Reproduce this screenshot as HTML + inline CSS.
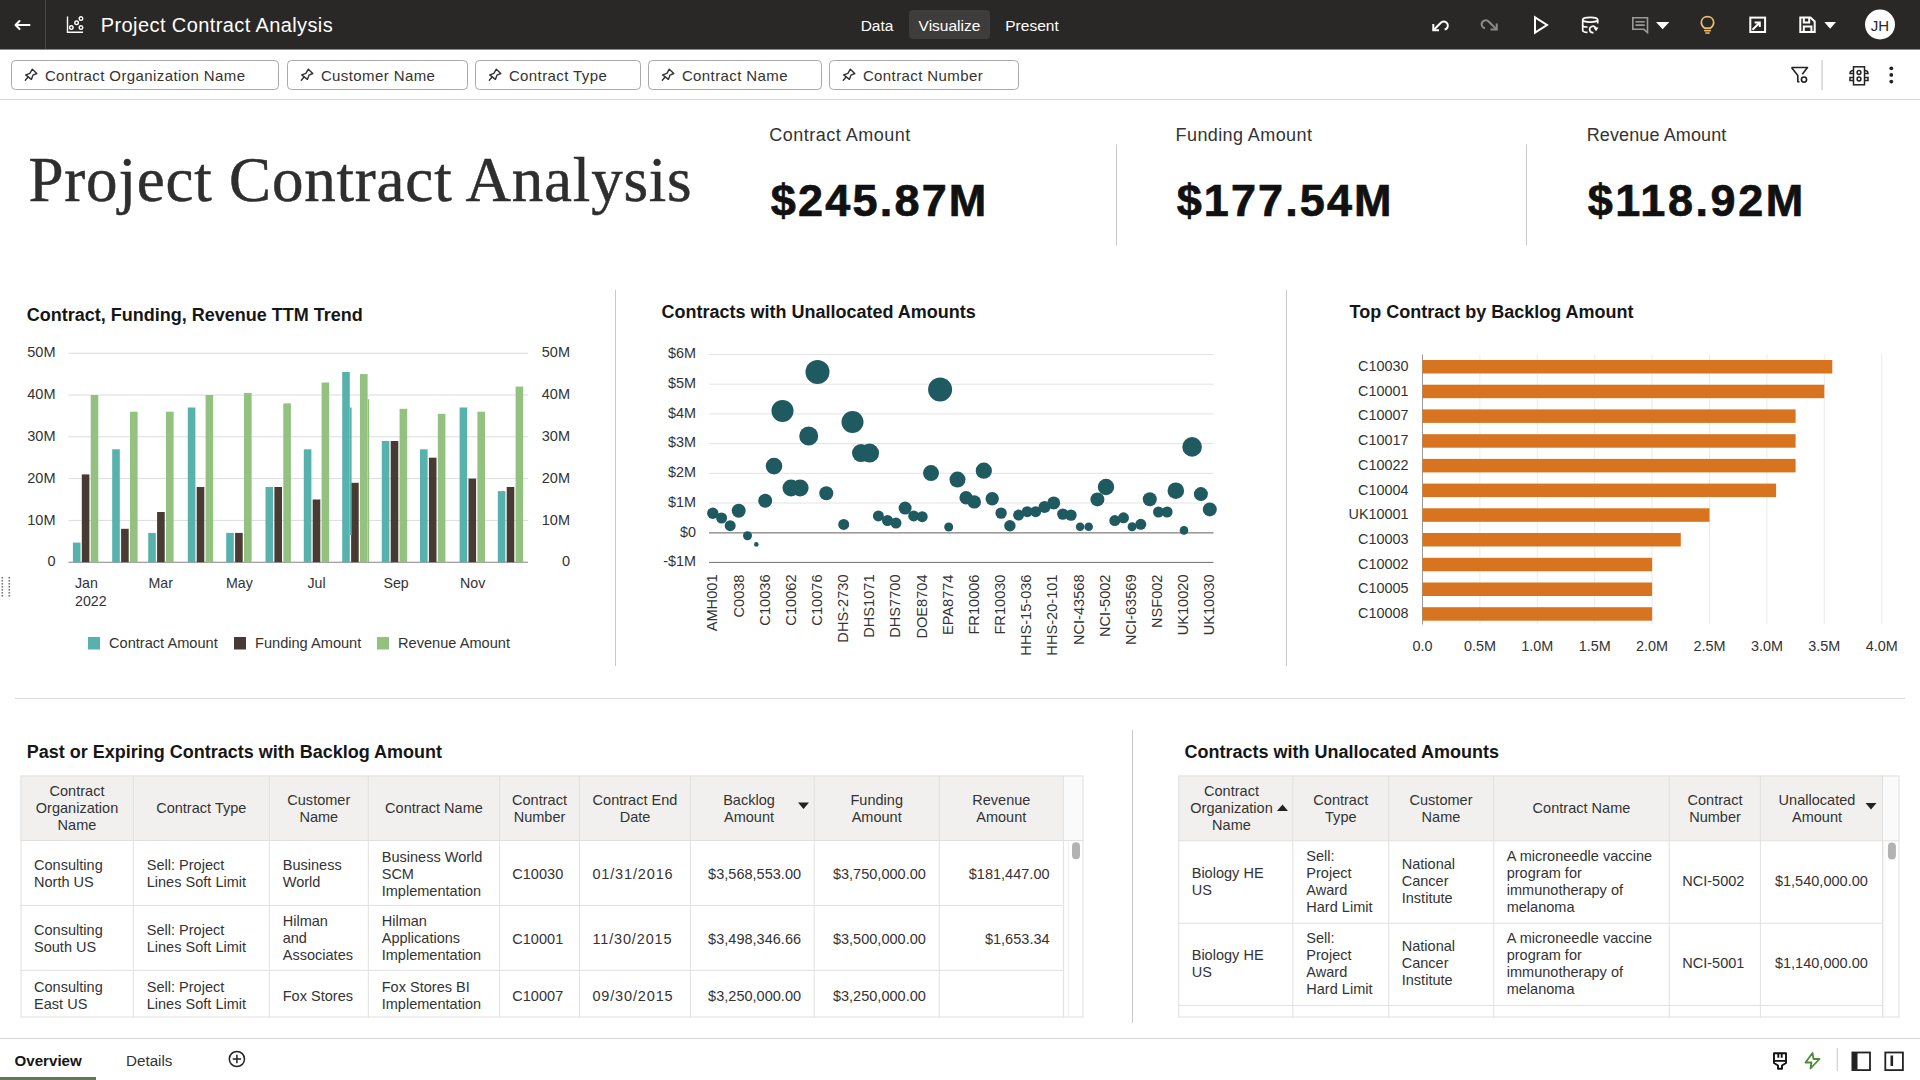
<!DOCTYPE html>
<html><head><meta charset="utf-8"><title>Project Contract Analysis</title>
<style>
html,body{margin:0;padding:0;width:1920px;height:1080px;overflow:hidden;background:#fff;}
body{font-family:"Liberation Sans", sans-serif;color:#333;position:relative;}
.abs{position:absolute;white-space:nowrap;}
svg text{font-family:"Liberation Sans", sans-serif;}
</style></head><body>

<div class="abs" style="left:0;top:0;width:1920px;height:49px;background:#2a2826;"></div><div class="abs" style="left:0;top:49px;width:1920px;height:1px;background:#8a8988;"></div>
<div class="abs" style="left:45px;top:0;width:1px;height:49px;background:#4c4a48;"></div>
<div class="abs" style="left:909px;top:10px;width:81px;height:29px;background:#3f3d3b;border-radius:4px;"></div>
<svg class="abs" style="left:0;top:0" width="1920" height="1080" viewBox="0 0 1920 1080">
<g stroke="#fff" stroke-width="2" fill="none" stroke-linecap="round" stroke-linejoin="round"><path d="M15.5 25H29.5M19.5 21L15.5 25L19.5 29"/></g>
<g stroke="#fff" stroke-width="1.4" fill="none"><path d="M67.5 16.5V32.3H83"/><circle cx="71.3" cy="27.6" r="1.8"/><circle cx="76.6" cy="22.8" r="1.8"/><circle cx="81" cy="18.6" r="1.8"/><circle cx="81" cy="27.6" r="1.8"/></g>
<text x="100.8" y="32.4" font-size="20" fill="#fff" font-weight="normal" text-anchor="start" letter-spacing="0.4" >Project Contract Analysis</text>
<text x="877" y="31" font-size="15.5" fill="#fff" font-weight="normal" text-anchor="middle" >Data</text>
<text x="949.5" y="31" font-size="15.5" fill="#fff" font-weight="normal" text-anchor="middle" >Visualize</text>
<text x="1032" y="31" font-size="15.5" fill="#fff" font-weight="normal" text-anchor="middle" >Present</text>
<g stroke="#fff" stroke-width="2" fill="none" stroke-linecap="butt" stroke-linejoin="miter"><path d="M1439 30.3H1433.3V24"/><path d="M1433.3 30.3L1440.6 23A4.1 4.1 0 1 1 1444.6 29.6"/></g>
<g stroke="#8d8b89" stroke-width="2" fill="none"><path d="M1490.5 29.6H1496.7V23.5"/><path d="M1496.7 29.6L1489 21.8A4.1 4.1 0 1 0 1485 28.3"/></g>
<path d="M1535 17.3 L1547 25 L1535 32.7 Z" stroke="#fff" stroke-width="2" fill="none" stroke-linejoin="miter"/>
<g stroke="#fff" stroke-width="1.7" fill="none"><ellipse cx="1590.2" cy="19.7" rx="7.5" ry="2.4"/><path d="M1582.7 19.7V30.5C1582.7 31.5 1584.5 32.2 1587.5 32.4M1597.7 19.7V23.5"/><path d="M1582.7 25.5C1582.7 26.5 1584.5 27 1587.5 27"/><path d="M1595.8 28.2A3.2 3.2 0 1 0 1593.5 32.6"/></g><path d="M1593.5 27.6 L1598.5 27.6 L1596 31.2 Z" fill="#fff"/>
<g stroke="#9c9a98" stroke-width="1.6" fill="none" stroke-linejoin="miter"><path d="M1632.8 17.8H1647.5V32.5L1643.8 29.3H1632.8Z"/><path d="M1635.5 21.7H1644.8M1635.5 25.1H1644.8"/></g>
<path d="M1656 22H1669.3L1662.65 29.3Z" fill="#fff"/>
<g stroke="#e6bd6c" stroke-width="1.7" fill="none" stroke-linecap="round"><path d="M1704.6 28.2C1702.5 26.8 1701.3 24.8 1701.3 22.6C1701.3 19 1704 16.6 1707.5 16.6C1711 16.6 1713.7 19 1713.7 22.6C1713.7 24.8 1712.5 26.8 1710.4 28.2Z"/><path d="M1704.8 30.6H1710.2M1706 33H1709"/></g>
<g stroke="#fff" stroke-width="2" fill="none"><rect x="1750.3" y="17.6" width="14.8" height="14.4"/><path d="M1752.5 29.8L1759.5 22.8M1754.6 22.5H1759.8V27"/></g>
<g stroke="#fff" stroke-width="2" fill="none" stroke-linejoin="miter"><path d="M1800.3 17.6H1810.4L1814.7 21.4V32H1800.3Z"/><path d="M1803.8 17.6V22.6H1809.2V17.6M1803.8 32V26.5H1811.4V32"/></g>
<path d="M1824.3 22.1H1836L1830.15 28.8Z" fill="#fff"/>
<circle cx="1880" cy="24.5" r="15" fill="#fff"/>
<text x="1880" y="30.5" font-size="15" fill="#2a2826" font-weight="normal" text-anchor="middle" >JH</text>
<rect x="11.5" y="60.5" width="267.0" height="29" rx="4" fill="#fff" stroke="#a9a9a9" stroke-width="1"/>
<g transform="translate(0.0,0)" stroke="#333" stroke-width="1.4" fill="none" stroke-linejoin="round" stroke-linecap="round"><path d="M32.3 69.2L36.8 73.5L33 75.1L31.4 79.4L25.7 74.9L29.9 73.4Z"/><path d="M27.9 77.3L25.3 80.3"/></g>
<text x="44.9" y="80.8" font-size="15" fill="#333" font-weight="normal" text-anchor="start" letter-spacing="0.4" >Contract Organization Name</text>
<rect x="287.5" y="60.5" width="180.0" height="29" rx="4" fill="#fff" stroke="#a9a9a9" stroke-width="1"/>
<g transform="translate(276.0,0)" stroke="#333" stroke-width="1.4" fill="none" stroke-linejoin="round" stroke-linecap="round"><path d="M32.3 69.2L36.8 73.5L33 75.1L31.4 79.4L25.7 74.9L29.9 73.4Z"/><path d="M27.9 77.3L25.3 80.3"/></g>
<text x="320.9" y="80.8" font-size="15" fill="#333" font-weight="normal" text-anchor="start" letter-spacing="0.4" >Customer Name</text>
<rect x="475.5" y="60.5" width="165.0" height="29" rx="4" fill="#fff" stroke="#a9a9a9" stroke-width="1"/>
<g transform="translate(464.0,0)" stroke="#333" stroke-width="1.4" fill="none" stroke-linejoin="round" stroke-linecap="round"><path d="M32.3 69.2L36.8 73.5L33 75.1L31.4 79.4L25.7 74.9L29.9 73.4Z"/><path d="M27.9 77.3L25.3 80.3"/></g>
<text x="508.9" y="80.8" font-size="15" fill="#333" font-weight="normal" text-anchor="start" letter-spacing="0.4" >Contract Type</text>
<rect x="648.5" y="60.5" width="173.0" height="29" rx="4" fill="#fff" stroke="#a9a9a9" stroke-width="1"/>
<g transform="translate(637.0,0)" stroke="#333" stroke-width="1.4" fill="none" stroke-linejoin="round" stroke-linecap="round"><path d="M32.3 69.2L36.8 73.5L33 75.1L31.4 79.4L25.7 74.9L29.9 73.4Z"/><path d="M27.9 77.3L25.3 80.3"/></g>
<text x="681.9" y="80.8" font-size="15" fill="#333" font-weight="normal" text-anchor="start" letter-spacing="0.4" >Contract Name</text>
<rect x="829.5" y="60.5" width="189.0" height="29" rx="4" fill="#fff" stroke="#a9a9a9" stroke-width="1"/>
<g transform="translate(818.0,0)" stroke="#333" stroke-width="1.4" fill="none" stroke-linejoin="round" stroke-linecap="round"><path d="M32.3 69.2L36.8 73.5L33 75.1L31.4 79.4L25.7 74.9L29.9 73.4Z"/><path d="M27.9 77.3L25.3 80.3"/></g>
<text x="862.9" y="80.8" font-size="15" fill="#333" font-weight="normal" text-anchor="start" letter-spacing="0.4" >Contract Number</text>
<rect x="0" y="99" width="1920" height="1" fill="#d6d6d6"/>
<g stroke="#222" stroke-width="1.6" fill="none" stroke-linejoin="round"><path d="M1791.5 67.5H1807.5L1802.3 74.3M1799.5 81.8H1797.8V75.5L1791.5 67.5"/><circle cx="1804" cy="79.6" r="2.6"/></g>
<rect x="1821.5" y="60" width="1.2" height="30" fill="#c9c9c9"/>
<g stroke="#222" stroke-width="1.5" fill="none"><rect x="1853.5" y="66.8" width="11" height="18"/><circle cx="1859" cy="72.5" r="1.9"/><circle cx="1859" cy="79" r="1.9"/><path d="M1853.5 70.5C1851 70.5 1850 71.5 1850 73.5H1853.5M1864.5 70.5C1867 70.5 1868 71.5 1868 73.5H1864.5M1853.5 77.5H1850V80.5H1853.5M1864.5 77.5H1868V80.5H1864.5"/></g>
<circle cx="1891.3" cy="68.3" r="1.9" fill="#222"/>
<circle cx="1891.3" cy="74.9" r="1.9" fill="#222"/>
<circle cx="1891.3" cy="81.6" r="1.9" fill="#222"/>
<text x="28.5" y="201" font-size="63" fill="#2e2e2e" stroke="#2e2e2e" stroke-width="0.5" letter-spacing="0.8" style="font-family:'Liberation Serif', serif">Project Contract Analysis</text>
<text x="769.2" y="141.3" font-size="18" fill="#333" font-weight="normal" text-anchor="start" letter-spacing="0.5" >Contract Amount</text>
<text x="770.8" y="216.3" font-size="45" fill="#111" font-weight="bold" text-anchor="start" letter-spacing="2.2" stroke="#111" stroke-width="0.7">$245.87M</text>
<text x="1175.6" y="141.3" font-size="18" fill="#333" font-weight="normal" text-anchor="start" letter-spacing="0.4" >Funding Amount</text>
<text x="1176.7" y="216.3" font-size="45" fill="#111" font-weight="bold" text-anchor="start" letter-spacing="2.1" stroke="#111" stroke-width="0.7">$177.54M</text>
<text x="1586.7" y="141.3" font-size="18" fill="#333" font-weight="normal" text-anchor="start" letter-spacing="0.12" >Revenue Amount</text>
<text x="1587.7" y="216.3" font-size="45" fill="#111" font-weight="bold" text-anchor="start" letter-spacing="2.55" stroke="#111" stroke-width="0.7">$118.92M</text>
<rect x="1116" y="144.5" width="1" height="101" fill="#c8c8c8"/>
<rect x="1526" y="144.5" width="1" height="101" fill="#c8c8c8"/>
<rect x="615" y="290" width="1" height="376" fill="#c8c8c8"/>
<rect x="1286" y="290" width="1" height="376" fill="#c8c8c8"/>
<rect x="15" y="698" width="1890" height="1" fill="#d9d9d9"/>
<rect x="1132" y="730" width="1" height="293" fill="#c8c8c8"/>
<text x="26.8" y="320.7" font-size="18" fill="#161616" font-weight="bold" text-anchor="start" >Contract, Funding, Revenue TTM Trend</text>
<rect x="68.5" y="561.7" width="459.5" height="1.2" fill="#9a9a9a"/>
<text x="55.5" y="566.4000000000001" font-size="14.5" fill="#333" font-weight="normal" text-anchor="end" >0</text>
<text x="570" y="566.4000000000001" font-size="14.5" fill="#333" font-weight="normal" text-anchor="end" >0</text>
<rect x="68.5" y="519.9" width="459.5" height="1" fill="#dcdcdc"/>
<text x="55.5" y="524.6000000000001" font-size="14.5" fill="#333" font-weight="normal" text-anchor="end" >10M</text>
<text x="570" y="524.6000000000001" font-size="14.5" fill="#333" font-weight="normal" text-anchor="end" >10M</text>
<rect x="68.5" y="478.1" width="459.5" height="1" fill="#dcdcdc"/>
<text x="55.5" y="482.8" font-size="14.5" fill="#333" font-weight="normal" text-anchor="end" >20M</text>
<text x="570" y="482.8" font-size="14.5" fill="#333" font-weight="normal" text-anchor="end" >20M</text>
<rect x="68.5" y="436.3" width="459.5" height="1" fill="#dcdcdc"/>
<text x="55.5" y="441.00000000000006" font-size="14.5" fill="#333" font-weight="normal" text-anchor="end" >30M</text>
<text x="570" y="441.00000000000006" font-size="14.5" fill="#333" font-weight="normal" text-anchor="end" >30M</text>
<rect x="68.5" y="394.5" width="459.5" height="1" fill="#dcdcdc"/>
<text x="55.5" y="399.20000000000005" font-size="14.5" fill="#333" font-weight="normal" text-anchor="end" >40M</text>
<text x="570" y="399.20000000000005" font-size="14.5" fill="#333" font-weight="normal" text-anchor="end" >40M</text>
<rect x="68.5" y="352.7" width="459.5" height="1" fill="#dcdcdc"/>
<text x="55.5" y="357.40000000000003" font-size="14.5" fill="#333" font-weight="normal" text-anchor="end" >50M</text>
<text x="570" y="357.40000000000003" font-size="14.5" fill="#333" font-weight="normal" text-anchor="end" >50M</text>
<rect x="72.9" y="542.6" width="7.6" height="19.6" fill="#57b2ae"/>
<rect x="81.8" y="474.4" width="7.6" height="87.8" fill="#483b33"/>
<rect x="90.7" y="395.0" width="7.6" height="167.2" fill="#92c180"/>
<rect x="112.2" y="449.3" width="7.6" height="112.9" fill="#57b2ae"/>
<rect x="121.1" y="528.8" width="7.6" height="33.4" fill="#483b33"/>
<rect x="130.0" y="411.7" width="7.6" height="150.5" fill="#92c180"/>
<rect x="148.2" y="532.9" width="7.6" height="29.3" fill="#57b2ae"/>
<rect x="157.1" y="512.0" width="7.6" height="50.2" fill="#483b33"/>
<rect x="166.0" y="411.7" width="7.6" height="150.5" fill="#92c180"/>
<rect x="187.8" y="407.5" width="7.6" height="154.7" fill="#57b2ae"/>
<rect x="196.7" y="487.0" width="7.6" height="75.2" fill="#483b33"/>
<rect x="205.6" y="395.0" width="7.6" height="167.2" fill="#92c180"/>
<rect x="226.2" y="532.9" width="7.6" height="29.3" fill="#57b2ae"/>
<rect x="235.1" y="532.9" width="7.6" height="29.3" fill="#483b33"/>
<rect x="244.0" y="392.9" width="7.6" height="169.3" fill="#92c180"/>
<rect x="265.5" y="487.0" width="7.6" height="75.2" fill="#57b2ae"/>
<rect x="274.4" y="487.0" width="7.6" height="75.2" fill="#483b33"/>
<rect x="283.3" y="403.4" width="7.6" height="158.8" fill="#92c180"/>
<rect x="303.8" y="449.3" width="7.6" height="112.9" fill="#57b2ae"/>
<rect x="312.7" y="499.5" width="7.6" height="62.7" fill="#483b33"/>
<rect x="321.6" y="382.5" width="7.6" height="179.7" fill="#92c180"/>
<rect x="342.2" y="372.0" width="7.6" height="190.2" fill="#57b2ae"/>
<rect x="351.1" y="482.8" width="7.6" height="79.4" fill="#483b33"/>
<rect x="360.0" y="374.1" width="7.6" height="188.1" fill="#92c180"/>
<rect x="381.8" y="441.0" width="7.6" height="121.2" fill="#57b2ae"/>
<rect x="390.7" y="441.0" width="7.6" height="121.2" fill="#483b33"/>
<rect x="399.6" y="408.8" width="7.6" height="153.4" fill="#92c180"/>
<rect x="420.0" y="449.3" width="7.6" height="112.9" fill="#57b2ae"/>
<rect x="428.9" y="457.7" width="7.6" height="104.5" fill="#483b33"/>
<rect x="437.8" y="413.8" width="7.6" height="148.4" fill="#92c180"/>
<rect x="459.6" y="407.5" width="7.6" height="154.7" fill="#57b2ae"/>
<rect x="468.5" y="478.6" width="7.6" height="83.6" fill="#483b33"/>
<rect x="477.4" y="411.7" width="7.6" height="150.5" fill="#92c180"/>
<rect x="497.8" y="491.1" width="7.6" height="71.1" fill="#57b2ae"/>
<rect x="506.7" y="487.0" width="7.6" height="75.2" fill="#483b33"/>
<rect x="515.6" y="386.6" width="7.6" height="175.6" fill="#92c180"/>
<rect x="350" y="407.5" width="1.6" height="127.5" fill="#57b2ae"/>
<rect x="367.8" y="399.2" width="1.4" height="163.0" fill="#92c180"/>
<text x="75" y="588" font-size="14.2" fill="#333" font-weight="normal" text-anchor="start" >Jan</text>
<text x="148.5" y="588" font-size="14.2" fill="#333" font-weight="normal" text-anchor="start" >Mar</text>
<text x="226" y="588" font-size="14.2" fill="#333" font-weight="normal" text-anchor="start" >May</text>
<text x="307.5" y="588" font-size="14.2" fill="#333" font-weight="normal" text-anchor="start" >Jul</text>
<text x="383.5" y="588" font-size="14.2" fill="#333" font-weight="normal" text-anchor="start" >Sep</text>
<text x="460" y="588" font-size="14.2" fill="#333" font-weight="normal" text-anchor="start" >Nov</text>
<text x="75" y="606" font-size="14.2" fill="#333" font-weight="normal" text-anchor="start" >2022</text>
<rect x="88" y="637" width="12" height="12.5" fill="#57b2ae"/>
<text x="109" y="648" font-size="14.6" fill="#333" font-weight="normal" text-anchor="start" >Contract Amount</text>
<rect x="234" y="637" width="12" height="12.5" fill="#483b33"/>
<text x="255" y="648" font-size="14.6" fill="#333" font-weight="normal" text-anchor="start" >Funding Amount</text>
<rect x="377" y="637" width="12" height="12.5" fill="#92c180"/>
<text x="398" y="648" font-size="14.6" fill="#333" font-weight="normal" text-anchor="start" >Revenue Amount</text>
<rect x="1.5" y="577" width="1.6" height="1.6" fill="#777"/>
<rect x="1.5" y="580" width="1.6" height="1.6" fill="#777"/>
<rect x="1.5" y="583" width="1.6" height="1.6" fill="#777"/>
<rect x="1.5" y="586" width="1.6" height="1.6" fill="#777"/>
<rect x="1.5" y="589" width="1.6" height="1.6" fill="#777"/>
<rect x="1.5" y="592" width="1.6" height="1.6" fill="#777"/>
<rect x="1.5" y="595" width="1.6" height="1.6" fill="#777"/>
<rect x="8.5" y="577" width="1.6" height="1.6" fill="#777"/>
<rect x="8.5" y="580" width="1.6" height="1.6" fill="#777"/>
<rect x="8.5" y="583" width="1.6" height="1.6" fill="#777"/>
<rect x="8.5" y="586" width="1.6" height="1.6" fill="#777"/>
<rect x="8.5" y="589" width="1.6" height="1.6" fill="#777"/>
<rect x="8.5" y="592" width="1.6" height="1.6" fill="#777"/>
<rect x="8.5" y="595" width="1.6" height="1.6" fill="#777"/>
<text x="661.5" y="318.2" font-size="18" fill="#161616" font-weight="bold" text-anchor="start" >Contracts with Unallocated Amounts</text>
<rect x="709" y="561.9" width="504.5" height="1" fill="#707070"/>
<text x="696" y="566.2" font-size="14.4" fill="#333" font-weight="normal" text-anchor="end" >-$1M</text>
<rect x="709" y="532.0" width="504.5" height="1.6" fill="#9c9c9c"/>
<text x="696" y="536.5" font-size="14.4" fill="#333" font-weight="normal" text-anchor="end" >$0</text>
<rect x="709" y="502.5" width="504.5" height="1" fill="#e3e3e3"/>
<text x="696" y="506.80000000000007" font-size="14.4" fill="#333" font-weight="normal" text-anchor="end" >$1M</text>
<rect x="709" y="472.8" width="504.5" height="1" fill="#e3e3e3"/>
<text x="696" y="477.1000000000001" font-size="14.4" fill="#333" font-weight="normal" text-anchor="end" >$2M</text>
<rect x="709" y="443.1" width="504.5" height="1" fill="#e3e3e3"/>
<text x="696" y="447.40000000000003" font-size="14.4" fill="#333" font-weight="normal" text-anchor="end" >$3M</text>
<rect x="709" y="413.4" width="504.5" height="1" fill="#e3e3e3"/>
<text x="696" y="417.70000000000005" font-size="14.4" fill="#333" font-weight="normal" text-anchor="end" >$4M</text>
<rect x="709" y="383.7" width="504.5" height="1" fill="#e3e3e3"/>
<text x="696" y="388.00000000000006" font-size="14.4" fill="#333" font-weight="normal" text-anchor="end" >$5M</text>
<rect x="709" y="354.0" width="504.5" height="1" fill="#e3e3e3"/>
<text x="696" y="358.30000000000007" font-size="14.4" fill="#333" font-weight="normal" text-anchor="end" >$6M</text>
<circle cx="712.8" cy="513.3" r="5.7" fill="#1f5a60"/>
<circle cx="721.6" cy="518" r="5.5" fill="#1f5a60"/>
<circle cx="730.2" cy="525.7" r="5.5" fill="#1f5a60"/>
<circle cx="738.7" cy="510.7" r="7" fill="#1f5a60"/>
<circle cx="747.5" cy="535.8" r="4.5" fill="#1f5a60"/>
<circle cx="756.3" cy="544.4" r="2.3" fill="#1f5a60"/>
<circle cx="765.2" cy="500.8" r="7" fill="#1f5a60"/>
<circle cx="774" cy="466.1" r="8.3" fill="#1f5a60"/>
<circle cx="782.5" cy="410.9" r="11" fill="#1f5a60"/>
<circle cx="791" cy="488.1" r="8.5" fill="#1f5a60"/>
<circle cx="800.1" cy="488.1" r="8.5" fill="#1f5a60"/>
<circle cx="808.7" cy="436" r="9.5" fill="#1f5a60"/>
<circle cx="817.5" cy="372" r="12" fill="#1f5a60"/>
<circle cx="826.3" cy="493.3" r="7" fill="#1f5a60"/>
<circle cx="843.7" cy="524.4" r="5.5" fill="#1f5a60"/>
<circle cx="852.5" cy="422" r="11" fill="#1f5a60"/>
<circle cx="861" cy="453.1" r="9" fill="#1f5a60"/>
<circle cx="869.6" cy="453.1" r="9.5" fill="#1f5a60"/>
<circle cx="878.4" cy="515.9" r="5.5" fill="#1f5a60"/>
<circle cx="887.5" cy="520.5" r="5.5" fill="#1f5a60"/>
<circle cx="896" cy="523.1" r="5.5" fill="#1f5a60"/>
<circle cx="905.1" cy="508.1" r="6.5" fill="#1f5a60"/>
<circle cx="913.7" cy="515.9" r="5.5" fill="#1f5a60"/>
<circle cx="922.2" cy="516.7" r="5.5" fill="#1f5a60"/>
<circle cx="931" cy="473.1" r="8" fill="#1f5a60"/>
<circle cx="940.1" cy="389.6" r="12" fill="#1f5a60"/>
<circle cx="948.7" cy="527" r="4.5" fill="#1f5a60"/>
<circle cx="957.5" cy="479.6" r="8" fill="#1f5a60"/>
<circle cx="966.1" cy="497.8" r="6.7" fill="#1f5a60"/>
<circle cx="974.3" cy="501.9" r="6.7" fill="#1f5a60"/>
<circle cx="983.8" cy="470.7" r="8.1" fill="#1f5a60"/>
<circle cx="992.2" cy="498.8" r="6.7" fill="#1f5a60"/>
<circle cx="1001.1" cy="513.1" r="5.7" fill="#1f5a60"/>
<circle cx="1009.9" cy="525.7" r="5.7" fill="#1f5a60"/>
<circle cx="1018.6" cy="515.1" r="5.5" fill="#1f5a60"/>
<circle cx="1027.2" cy="511.7" r="5.5" fill="#1f5a60"/>
<circle cx="1035.7" cy="511.7" r="5.5" fill="#1f5a60"/>
<circle cx="1044.5" cy="507" r="6" fill="#1f5a60"/>
<circle cx="1053.7" cy="502.9" r="6.5" fill="#1f5a60"/>
<circle cx="1062.8" cy="514.1" r="5.7" fill="#1f5a60"/>
<circle cx="1071" cy="515.1" r="5.7" fill="#1f5a60"/>
<circle cx="1080.1" cy="526.7" r="4.3" fill="#1f5a60"/>
<circle cx="1088.7" cy="526.7" r="4.3" fill="#1f5a60"/>
<circle cx="1097.4" cy="499.4" r="7" fill="#1f5a60"/>
<circle cx="1106" cy="487" r="8.2" fill="#1f5a60"/>
<circle cx="1114.8" cy="520.6" r="5.5" fill="#1f5a60"/>
<circle cx="1123.5" cy="517.8" r="5.5" fill="#1f5a60"/>
<circle cx="1132.1" cy="526.7" r="4.5" fill="#1f5a60"/>
<circle cx="1140.8" cy="524.3" r="5.5" fill="#1f5a60"/>
<circle cx="1149.8" cy="499.2" r="7" fill="#1f5a60"/>
<circle cx="1158.5" cy="512" r="5.5" fill="#1f5a60"/>
<circle cx="1167.1" cy="512" r="5.5" fill="#1f5a60"/>
<circle cx="1175.8" cy="490.7" r="8.3" fill="#1f5a60"/>
<circle cx="1184" cy="530.4" r="4.3" fill="#1f5a60"/>
<circle cx="1192.1" cy="446.9" r="9.8" fill="#1f5a60"/>
<circle cx="1200.9" cy="494.1" r="7" fill="#1f5a60"/>
<circle cx="1209.8" cy="509.4" r="7" fill="#1f5a60"/>
<text x="0" y="0" font-size="14.6" fill="#333" text-anchor="end" transform="translate(717.3,574.5) rotate(-90)">AMH001</text>
<text x="0" y="0" font-size="14.6" fill="#333" text-anchor="end" transform="translate(743.5,574.5) rotate(-90)">C0038</text>
<text x="0" y="0" font-size="14.6" fill="#333" text-anchor="end" transform="translate(769.6,574.5) rotate(-90)">C10036</text>
<text x="0" y="0" font-size="14.6" fill="#333" text-anchor="end" transform="translate(795.8,574.5) rotate(-90)">C10062</text>
<text x="0" y="0" font-size="14.6" fill="#333" text-anchor="end" transform="translate(821.9,574.5) rotate(-90)">C10076</text>
<text x="0" y="0" font-size="14.6" fill="#333" text-anchor="end" transform="translate(848.1,574.5) rotate(-90)">DHS-2730</text>
<text x="0" y="0" font-size="14.6" fill="#333" text-anchor="end" transform="translate(874.3,574.5) rotate(-90)">DHS1071</text>
<text x="0" y="0" font-size="14.6" fill="#333" text-anchor="end" transform="translate(900.4,574.5) rotate(-90)">DHS7700</text>
<text x="0" y="0" font-size="14.6" fill="#333" text-anchor="end" transform="translate(926.6,574.5) rotate(-90)">DOE8704</text>
<text x="0" y="0" font-size="14.6" fill="#333" text-anchor="end" transform="translate(952.7,574.5) rotate(-90)">EPA8774</text>
<text x="0" y="0" font-size="14.6" fill="#333" text-anchor="end" transform="translate(978.9,574.5) rotate(-90)">FR10006</text>
<text x="0" y="0" font-size="14.6" fill="#333" text-anchor="end" transform="translate(1005.1,574.5) rotate(-90)">FR10030</text>
<text x="0" y="0" font-size="14.6" fill="#333" text-anchor="end" transform="translate(1031.2,574.5) rotate(-90)">HHS-15-036</text>
<text x="0" y="0" font-size="14.6" fill="#333" text-anchor="end" transform="translate(1057.4,574.5) rotate(-90)">HHS-20-101</text>
<text x="0" y="0" font-size="14.6" fill="#333" text-anchor="end" transform="translate(1083.5,574.5) rotate(-90)">NCI-43568</text>
<text x="0" y="0" font-size="14.6" fill="#333" text-anchor="end" transform="translate(1109.7,574.5) rotate(-90)">NCI-5002</text>
<text x="0" y="0" font-size="14.6" fill="#333" text-anchor="end" transform="translate(1135.9,574.5) rotate(-90)">NCI-63569</text>
<text x="0" y="0" font-size="14.6" fill="#333" text-anchor="end" transform="translate(1162.0,574.5) rotate(-90)">NSF002</text>
<text x="0" y="0" font-size="14.6" fill="#333" text-anchor="end" transform="translate(1188.2,574.5) rotate(-90)">UK10020</text>
<text x="0" y="0" font-size="14.6" fill="#333" text-anchor="end" transform="translate(1214.3,574.5) rotate(-90)">UK10030</text>
<text x="1349.6" y="318.2" font-size="18" fill="#161616" font-weight="bold" text-anchor="start" >Top Contract by Backlog Amount</text>
<rect x="1422.0" y="354.5" width="1" height="270" fill="#9a9a9a"/>
<text x="1422.5" y="650.5" font-size="14.4" fill="#333" font-weight="normal" text-anchor="middle" >0.0</text>
<rect x="1479.4" y="354.5" width="1" height="270" fill="#ebebeb"/>
<text x="1479.9" y="650.5" font-size="14.4" fill="#333" font-weight="normal" text-anchor="middle" >0.5M</text>
<rect x="1536.8" y="354.5" width="1" height="270" fill="#ebebeb"/>
<text x="1537.3" y="650.5" font-size="14.4" fill="#333" font-weight="normal" text-anchor="middle" >1.0M</text>
<rect x="1594.2" y="354.5" width="1" height="270" fill="#ebebeb"/>
<text x="1594.7" y="650.5" font-size="14.4" fill="#333" font-weight="normal" text-anchor="middle" >1.5M</text>
<rect x="1651.6" y="354.5" width="1" height="270" fill="#ebebeb"/>
<text x="1652.1" y="650.5" font-size="14.4" fill="#333" font-weight="normal" text-anchor="middle" >2.0M</text>
<rect x="1709.0" y="354.5" width="1" height="270" fill="#ebebeb"/>
<text x="1709.5" y="650.5" font-size="14.4" fill="#333" font-weight="normal" text-anchor="middle" >2.5M</text>
<rect x="1766.4" y="354.5" width="1" height="270" fill="#ebebeb"/>
<text x="1766.9" y="650.5" font-size="14.4" fill="#333" font-weight="normal" text-anchor="middle" >3.0M</text>
<rect x="1823.8" y="354.5" width="1" height="270" fill="#ebebeb"/>
<text x="1824.3" y="650.5" font-size="14.4" fill="#333" font-weight="normal" text-anchor="middle" >3.5M</text>
<rect x="1881.2" y="354.5" width="1" height="270" fill="#ebebeb"/>
<text x="1881.7" y="650.5" font-size="14.4" fill="#333" font-weight="normal" text-anchor="middle" >4.0M</text>
<rect x="1422.5" y="360.0" width="409.8" height="13.5" fill="#d8741f"/>
<text x="1408.5" y="370.9" font-size="14.4" fill="#333" font-weight="normal" text-anchor="end" >C10030</text>
<rect x="1422.5" y="384.7" width="401.8" height="13.5" fill="#d8741f"/>
<text x="1408.5" y="395.62" font-size="14.4" fill="#333" font-weight="normal" text-anchor="end" >C10001</text>
<rect x="1422.5" y="409.4" width="373.1" height="13.5" fill="#d8741f"/>
<text x="1408.5" y="420.34" font-size="14.4" fill="#333" font-weight="normal" text-anchor="end" >C10007</text>
<rect x="1422.5" y="434.2" width="373.1" height="13.5" fill="#d8741f"/>
<text x="1408.5" y="445.05999999999995" font-size="14.4" fill="#333" font-weight="normal" text-anchor="end" >C10017</text>
<rect x="1422.5" y="458.9" width="373.1" height="13.5" fill="#d8741f"/>
<text x="1408.5" y="469.78" font-size="14.4" fill="#333" font-weight="normal" text-anchor="end" >C10022</text>
<rect x="1422.5" y="483.6" width="353.6" height="13.5" fill="#d8741f"/>
<text x="1408.5" y="494.5" font-size="14.4" fill="#333" font-weight="normal" text-anchor="end" >C10004</text>
<rect x="1422.5" y="508.3" width="287.0" height="13.5" fill="#d8741f"/>
<text x="1408.5" y="519.22" font-size="14.4" fill="#333" font-weight="normal" text-anchor="end" >UK10001</text>
<rect x="1422.5" y="533.0" width="258.3" height="13.5" fill="#d8741f"/>
<text x="1408.5" y="543.9399999999999" font-size="14.4" fill="#333" font-weight="normal" text-anchor="end" >C10003</text>
<rect x="1422.5" y="557.8" width="229.6" height="13.5" fill="#d8741f"/>
<text x="1408.5" y="568.66" font-size="14.4" fill="#333" font-weight="normal" text-anchor="end" >C10002</text>
<rect x="1422.5" y="582.5" width="229.6" height="13.5" fill="#d8741f"/>
<text x="1408.5" y="593.38" font-size="14.4" fill="#333" font-weight="normal" text-anchor="end" >C10005</text>
<rect x="1422.5" y="607.2" width="229.6" height="13.5" fill="#d8741f"/>
<text x="1408.5" y="618.1" font-size="14.4" fill="#333" font-weight="normal" text-anchor="end" >C10008</text>
<text x="26.7" y="757.6" font-size="18" fill="#161616" font-weight="bold" text-anchor="start" >Past or Expiring Contracts with Backlog Amount</text>
<rect x="20.5" y="775.5" width="1042.9" height="65.0" fill="#f1f0ef"/>
<rect x="1063.4" y="775.5" width="20.1" height="65.0" fill="#fafafa"/>
<rect x="21.0" y="776.0" width="1062.0" height="241.0" fill="none" stroke="#e0e0e0" stroke-width="1"/>
<rect x="132.8" y="775.5" width="1" height="242.0" fill="#e0e0e0"/>
<rect x="268.8" y="775.5" width="1" height="242.0" fill="#e0e0e0"/>
<rect x="367.8" y="775.5" width="1" height="242.0" fill="#e0e0e0"/>
<rect x="499.1" y="775.5" width="1" height="242.0" fill="#e0e0e0"/>
<rect x="578.9" y="775.5" width="1" height="242.0" fill="#e0e0e0"/>
<rect x="689.9" y="775.5" width="1" height="242.0" fill="#e0e0e0"/>
<rect x="813.7" y="775.5" width="1" height="242.0" fill="#e0e0e0"/>
<rect x="938.8" y="775.5" width="1" height="242.0" fill="#e0e0e0"/>
<rect x="1062.9" y="775.5" width="1" height="242.0" fill="#e0e0e0"/>
<rect x="20.5" y="840.0" width="1063.0" height="1" fill="#e0e0e0"/>
<rect x="20.5" y="904.9" width="1042.9" height="1" fill="#e0e0e0"/>
<rect x="20.5" y="969.9" width="1042.9" height="1" fill="#e0e0e0"/>
<rect x="1068.3" y="840.5" width="0.8" height="176.0" fill="#ececec"/>
<rect x="1072.0" y="842.2" width="8" height="17" rx="4" fill="#b3b3b3"/>
<text x="77" y="796.4" font-size="14.5" fill="#333" font-weight="normal" text-anchor="middle" letter-spacing="0.02" >Contract</text>
<text x="77" y="813.4" font-size="14.5" fill="#333" font-weight="normal" text-anchor="middle" letter-spacing="0.02" >Organization</text>
<text x="77" y="830.4" font-size="14.5" fill="#333" font-weight="normal" text-anchor="middle" letter-spacing="0.02" >Name</text>
<text x="201.3" y="813.4" font-size="14.5" fill="#333" font-weight="normal" text-anchor="middle" letter-spacing="0.02" >Contract Type</text>
<text x="318.8" y="804.9" font-size="14.5" fill="#333" font-weight="normal" text-anchor="middle" letter-spacing="0.02" >Customer</text>
<text x="318.8" y="821.9" font-size="14.5" fill="#333" font-weight="normal" text-anchor="middle" letter-spacing="0.02" >Name</text>
<text x="434" y="813.4" font-size="14.5" fill="#333" font-weight="normal" text-anchor="middle" letter-spacing="0.02" >Contract Name</text>
<text x="539.5" y="804.9" font-size="14.5" fill="#333" font-weight="normal" text-anchor="middle" letter-spacing="0.02" >Contract</text>
<text x="539.5" y="821.9" font-size="14.5" fill="#333" font-weight="normal" text-anchor="middle" letter-spacing="0.02" >Number</text>
<text x="635" y="804.9" font-size="14.5" fill="#333" font-weight="normal" text-anchor="middle" letter-spacing="0.02" >Contract End</text>
<text x="635" y="821.9" font-size="14.5" fill="#333" font-weight="normal" text-anchor="middle" letter-spacing="0.02" >Date</text>
<text x="749" y="804.9" font-size="14.5" fill="#333" font-weight="normal" text-anchor="middle" letter-spacing="0.02" >Backlog</text>
<text x="749" y="821.9" font-size="14.5" fill="#333" font-weight="normal" text-anchor="middle" letter-spacing="0.02" >Amount</text>
<path d="M798 802.5H809L803.5 809Z" fill="#222"/>
<text x="876.7" y="804.9" font-size="14.5" fill="#333" font-weight="normal" text-anchor="middle" letter-spacing="0.02" >Funding</text>
<text x="876.7" y="821.9" font-size="14.5" fill="#333" font-weight="normal" text-anchor="middle" letter-spacing="0.02" >Amount</text>
<text x="1001.3" y="804.9" font-size="14.5" fill="#333" font-weight="normal" text-anchor="middle" letter-spacing="0.02" >Revenue</text>
<text x="1001.3" y="821.9" font-size="14.5" fill="#333" font-weight="normal" text-anchor="middle" letter-spacing="0.02" >Amount</text>
<text x="34" y="870.1" font-size="14.5" fill="#333" font-weight="normal" text-anchor="start" letter-spacing="0.02" >Consulting</text>
<text x="34" y="887.1" font-size="14.5" fill="#333" font-weight="normal" text-anchor="start" letter-spacing="0.02" >North US</text>
<text x="146.7" y="870.1" font-size="14.5" fill="#333" font-weight="normal" text-anchor="start" letter-spacing="0.02" >Sell: Project</text>
<text x="146.7" y="887.1" font-size="14.5" fill="#333" font-weight="normal" text-anchor="start" letter-spacing="0.02" >Lines Soft Limit</text>
<text x="282.7" y="870.1" font-size="14.5" fill="#333" font-weight="normal" text-anchor="start" letter-spacing="0.02" >Business</text>
<text x="282.7" y="887.1" font-size="14.5" fill="#333" font-weight="normal" text-anchor="start" letter-spacing="0.02" >World</text>
<text x="381.7" y="861.6" font-size="14.5" fill="#333" font-weight="normal" text-anchor="start" letter-spacing="0.02" >Business World</text>
<text x="381.7" y="878.6" font-size="14.5" fill="#333" font-weight="normal" text-anchor="start" letter-spacing="0.02" >SCM</text>
<text x="381.7" y="895.6" font-size="14.5" fill="#333" font-weight="normal" text-anchor="start" letter-spacing="0.02" >Implementation</text>
<text x="512.3" y="878.6" font-size="14.5" fill="#333" font-weight="normal" text-anchor="start" letter-spacing="0.02" >C10030</text>
<text x="592.4" y="878.6" font-size="14.5" fill="#333" font-weight="normal" text-anchor="start" letter-spacing="0.85" >01/31/2016</text>
<text x="801.1" y="878.6" font-size="14.5" fill="#333" font-weight="normal" text-anchor="end" letter-spacing="0.02" >$3,568,553.00</text>
<text x="925.9" y="878.6" font-size="14.5" fill="#333" font-weight="normal" text-anchor="end" letter-spacing="0.02" >$3,750,000.00</text>
<text x="1049.6" y="878.6" font-size="14.5" fill="#333" font-weight="normal" text-anchor="end" letter-spacing="0.02" >$181,447.00</text>
<text x="34" y="934.6" font-size="14.5" fill="#333" font-weight="normal" text-anchor="start" letter-spacing="0.02" >Consulting</text>
<text x="34" y="951.6" font-size="14.5" fill="#333" font-weight="normal" text-anchor="start" letter-spacing="0.02" >South US</text>
<text x="146.7" y="934.6" font-size="14.5" fill="#333" font-weight="normal" text-anchor="start" letter-spacing="0.02" >Sell: Project</text>
<text x="146.7" y="951.6" font-size="14.5" fill="#333" font-weight="normal" text-anchor="start" letter-spacing="0.02" >Lines Soft Limit</text>
<text x="282.7" y="926.4" font-size="14.5" fill="#333" font-weight="normal" text-anchor="start" letter-spacing="0.02" >Hilman</text>
<text x="282.7" y="943.4" font-size="14.5" fill="#333" font-weight="normal" text-anchor="start" letter-spacing="0.02" >and</text>
<text x="282.7" y="960.4" font-size="14.5" fill="#333" font-weight="normal" text-anchor="start" letter-spacing="0.02" >Associates</text>
<text x="381.7" y="926.4" font-size="14.5" fill="#333" font-weight="normal" text-anchor="start" letter-spacing="0.02" >Hilman</text>
<text x="381.7" y="943.4" font-size="14.5" fill="#333" font-weight="normal" text-anchor="start" letter-spacing="0.02" >Applications</text>
<text x="381.7" y="960.4" font-size="14.5" fill="#333" font-weight="normal" text-anchor="start" letter-spacing="0.02" >Implementation</text>
<text x="512.3" y="943.6" font-size="14.5" fill="#333" font-weight="normal" text-anchor="start" letter-spacing="0.02" >C10001</text>
<text x="592.4" y="943.6" font-size="14.5" fill="#333" font-weight="normal" text-anchor="start" letter-spacing="0.85" >11/30/2015</text>
<text x="801.1" y="943.6" font-size="14.5" fill="#333" font-weight="normal" text-anchor="end" letter-spacing="0.02" >$3,498,346.66</text>
<text x="925.9" y="943.6" font-size="14.5" fill="#333" font-weight="normal" text-anchor="end" letter-spacing="0.02" >$3,500,000.00</text>
<text x="1049.6" y="943.6" font-size="14.5" fill="#333" font-weight="normal" text-anchor="end" letter-spacing="0.02" >$1,653.34</text>
<text x="34" y="992.1" font-size="14.5" fill="#333" font-weight="normal" text-anchor="start" letter-spacing="0.02" >Consulting</text>
<text x="34" y="1009.1" font-size="14.5" fill="#333" font-weight="normal" text-anchor="start" letter-spacing="0.02" >East US</text>
<text x="146.7" y="992.1" font-size="14.5" fill="#333" font-weight="normal" text-anchor="start" letter-spacing="0.02" >Sell: Project</text>
<text x="146.7" y="1009.1" font-size="14.5" fill="#333" font-weight="normal" text-anchor="start" letter-spacing="0.02" >Lines Soft Limit</text>
<text x="282.7" y="1000.6" font-size="14.5" fill="#333" font-weight="normal" text-anchor="start" letter-spacing="0.02" >Fox Stores</text>
<text x="381.7" y="992.1" font-size="14.5" fill="#333" font-weight="normal" text-anchor="start" letter-spacing="0.02" >Fox Stores BI</text>
<text x="381.7" y="1009.1" font-size="14.5" fill="#333" font-weight="normal" text-anchor="start" letter-spacing="0.02" >Implementation</text>
<text x="512.3" y="1001.1" font-size="14.5" fill="#333" font-weight="normal" text-anchor="start" letter-spacing="0.02" >C10007</text>
<text x="592.4" y="1001.1" font-size="14.5" fill="#333" font-weight="normal" text-anchor="start" letter-spacing="0.85" >09/30/2015</text>
<text x="801.1" y="1001.1" font-size="14.5" fill="#333" font-weight="normal" text-anchor="end" letter-spacing="0.02" >$3,250,000.00</text>
<text x="925.9" y="1001.1" font-size="14.5" fill="#333" font-weight="normal" text-anchor="end" letter-spacing="0.02" >$3,250,000.00</text>
<text x="1184.6" y="757.6" font-size="18" fill="#161616" font-weight="bold" text-anchor="start" >Contracts with Unallocated Amounts</text>
<rect x="1178.3" y="775.5" width="704.2" height="65.3" fill="#f1f0ef"/>
<rect x="1882.5" y="775.5" width="17.0" height="65.3" fill="#fafafa"/>
<rect x="1178.8" y="776.0" width="720.2" height="241.0" fill="none" stroke="#e0e0e0" stroke-width="1"/>
<rect x="1292.4" y="775.5" width="1" height="242.0" fill="#e0e0e0"/>
<rect x="1388.2" y="775.5" width="1" height="242.0" fill="#e0e0e0"/>
<rect x="1493.2" y="775.5" width="1" height="242.0" fill="#e0e0e0"/>
<rect x="1668.7" y="775.5" width="1" height="242.0" fill="#e0e0e0"/>
<rect x="1759.9" y="775.5" width="1" height="242.0" fill="#e0e0e0"/>
<rect x="1882.0" y="775.5" width="1" height="242.0" fill="#e0e0e0"/>
<rect x="1178.3" y="840.3" width="721.2" height="1" fill="#e0e0e0"/>
<rect x="1178.3" y="922.8" width="704.2" height="1" fill="#e0e0e0"/>
<rect x="1178.3" y="1004.9" width="704.2" height="1" fill="#e0e0e0"/>
<rect x="1883.5" y="840.8" width="0.8" height="175.7" fill="#ececec"/>
<rect x="1887.9" y="842.5" width="8" height="17" rx="4" fill="#b3b3b3"/>
<text x="1231.5" y="796.4" font-size="14.5" fill="#333" font-weight="normal" text-anchor="middle" letter-spacing="0.02" >Contract</text>
<text x="1231.5" y="813.4" font-size="14.5" fill="#333" font-weight="normal" text-anchor="middle" letter-spacing="0.02" >Organization</text>
<text x="1231.5" y="830.4" font-size="14.5" fill="#333" font-weight="normal" text-anchor="middle" letter-spacing="0.02" >Name</text>
<path d="M1277 811H1288L1282.5 804.5Z" fill="#222"/>
<text x="1340.8" y="804.9" font-size="14.5" fill="#333" font-weight="normal" text-anchor="middle" letter-spacing="0.02" >Contract</text>
<text x="1340.8" y="821.9" font-size="14.5" fill="#333" font-weight="normal" text-anchor="middle" letter-spacing="0.02" >Type</text>
<text x="1441" y="804.9" font-size="14.5" fill="#333" font-weight="normal" text-anchor="middle" letter-spacing="0.02" >Customer</text>
<text x="1441" y="821.9" font-size="14.5" fill="#333" font-weight="normal" text-anchor="middle" letter-spacing="0.02" >Name</text>
<text x="1581.5" y="813.4" font-size="14.5" fill="#333" font-weight="normal" text-anchor="middle" letter-spacing="0.02" >Contract Name</text>
<text x="1715" y="804.9" font-size="14.5" fill="#333" font-weight="normal" text-anchor="middle" letter-spacing="0.02" >Contract</text>
<text x="1715" y="821.9" font-size="14.5" fill="#333" font-weight="normal" text-anchor="middle" letter-spacing="0.02" >Number</text>
<text x="1817" y="804.9" font-size="14.5" fill="#333" font-weight="normal" text-anchor="middle" letter-spacing="0.02" >Unallocated</text>
<text x="1817" y="821.9" font-size="14.5" fill="#333" font-weight="normal" text-anchor="middle" letter-spacing="0.02" >Amount</text>
<path d="M1865.5 803H1876.5L1871 809.5Z" fill="#222"/>
<text x="1191.7" y="877.6" font-size="14.5" fill="#333" font-weight="normal" text-anchor="start" letter-spacing="0.02" >Biology HE</text>
<text x="1191.7" y="894.6" font-size="14.5" fill="#333" font-weight="normal" text-anchor="start" letter-spacing="0.02" >US</text>
<text x="1306.3" y="860.6" font-size="14.5" fill="#333" font-weight="normal" text-anchor="start" letter-spacing="0.02" >Sell:</text>
<text x="1306.3" y="877.6" font-size="14.5" fill="#333" font-weight="normal" text-anchor="start" letter-spacing="0.02" >Project</text>
<text x="1306.3" y="894.6" font-size="14.5" fill="#333" font-weight="normal" text-anchor="start" letter-spacing="0.02" >Award</text>
<text x="1306.3" y="911.6" font-size="14.5" fill="#333" font-weight="normal" text-anchor="start" letter-spacing="0.02" >Hard Limit</text>
<text x="1401.7" y="869.1" font-size="14.5" fill="#333" font-weight="normal" text-anchor="start" letter-spacing="0.02" >National</text>
<text x="1401.7" y="886.1" font-size="14.5" fill="#333" font-weight="normal" text-anchor="start" letter-spacing="0.02" >Cancer</text>
<text x="1401.7" y="903.1" font-size="14.5" fill="#333" font-weight="normal" text-anchor="start" letter-spacing="0.02" >Institute</text>
<text x="1506.7" y="860.6" font-size="14.5" fill="#333" font-weight="normal" text-anchor="start" letter-spacing="0.02" >A microneedle vaccine</text>
<text x="1506.7" y="877.6" font-size="14.5" fill="#333" font-weight="normal" text-anchor="start" letter-spacing="0.02" >program for</text>
<text x="1506.7" y="894.6" font-size="14.5" fill="#333" font-weight="normal" text-anchor="start" letter-spacing="0.02" >immunotherapy of</text>
<text x="1506.7" y="911.6" font-size="14.5" fill="#333" font-weight="normal" text-anchor="start" letter-spacing="0.02" >melanoma</text>
<text x="1682.2" y="885.6" font-size="14.5" fill="#333" font-weight="normal" text-anchor="start" letter-spacing="0.02" >NCI-5002</text>
<text x="1867.9" y="885.6" font-size="14.5" fill="#333" font-weight="normal" text-anchor="end" letter-spacing="0.02" >$1,540,000.00</text>
<text x="1191.7" y="959.9" font-size="14.5" fill="#333" font-weight="normal" text-anchor="start" letter-spacing="0.02" >Biology HE</text>
<text x="1191.7" y="976.9" font-size="14.5" fill="#333" font-weight="normal" text-anchor="start" letter-spacing="0.02" >US</text>
<text x="1306.3" y="942.9" font-size="14.5" fill="#333" font-weight="normal" text-anchor="start" letter-spacing="0.02" >Sell:</text>
<text x="1306.3" y="959.9" font-size="14.5" fill="#333" font-weight="normal" text-anchor="start" letter-spacing="0.02" >Project</text>
<text x="1306.3" y="976.9" font-size="14.5" fill="#333" font-weight="normal" text-anchor="start" letter-spacing="0.02" >Award</text>
<text x="1306.3" y="993.9" font-size="14.5" fill="#333" font-weight="normal" text-anchor="start" letter-spacing="0.02" >Hard Limit</text>
<text x="1401.7" y="951.4" font-size="14.5" fill="#333" font-weight="normal" text-anchor="start" letter-spacing="0.02" >National</text>
<text x="1401.7" y="968.4" font-size="14.5" fill="#333" font-weight="normal" text-anchor="start" letter-spacing="0.02" >Cancer</text>
<text x="1401.7" y="985.4" font-size="14.5" fill="#333" font-weight="normal" text-anchor="start" letter-spacing="0.02" >Institute</text>
<text x="1506.7" y="942.9" font-size="14.5" fill="#333" font-weight="normal" text-anchor="start" letter-spacing="0.02" >A microneedle vaccine</text>
<text x="1506.7" y="959.9" font-size="14.5" fill="#333" font-weight="normal" text-anchor="start" letter-spacing="0.02" >program for</text>
<text x="1506.7" y="976.9" font-size="14.5" fill="#333" font-weight="normal" text-anchor="start" letter-spacing="0.02" >immunotherapy of</text>
<text x="1506.7" y="993.9" font-size="14.5" fill="#333" font-weight="normal" text-anchor="start" letter-spacing="0.02" >melanoma</text>
<text x="1682.2" y="967.9" font-size="14.5" fill="#333" font-weight="normal" text-anchor="start" letter-spacing="0.02" >NCI-5001</text>
<text x="1867.9" y="967.9" font-size="14.5" fill="#333" font-weight="normal" text-anchor="end" letter-spacing="0.02" >$1,140,000.00</text>
<rect x="0" y="1038" width="1920" height="1" fill="#d6d6d6"/>
<text x="14.6" y="1065.8" font-size="15.1" fill="#161616" font-weight="bold" text-anchor="start" >Overview</text>
<rect x="0" y="1077" width="96" height="3" fill="#5e7a52"/>
<text x="126" y="1065.8" font-size="15.2" fill="#333" font-weight="normal" text-anchor="start" >Details</text>
<g stroke="#222" stroke-width="1.5" fill="none"><circle cx="236.9" cy="1059" r="7.6"/><path d="M236.9 1054.8V1063.2M232.7 1059H241.1"/></g>
<g stroke="#111" stroke-width="1.9" fill="none" stroke-linejoin="round"><path d="M1774 1053.2H1786V1063L1782 1065.5V1068.8H1778V1065.5L1774 1063Z"/><path d="M1774 1060.9H1786M1778.3 1053.5V1057.8M1781.7 1053.5V1057.8"/></g>
<path d="M1812.5 1053L1805.5 1062.5H1811.5L1810.5 1068.5L1819.5 1059H1813.5Z" stroke="#4f8c3a" stroke-width="1.8" fill="none" stroke-linejoin="round"/>
<rect x="1836.7" y="1048" width="1.2" height="23" fill="#cfcfcf"/>
<g stroke="#222" stroke-width="1.8" fill="none"><rect x="1852.4" y="1052.5" width="17.6" height="17.6"/><rect x="1885.3" y="1052.5" width="17.6" height="17.6"/></g>
<rect x="1853" y="1053" width="4.5" height="16.6" fill="#222"/>
<rect x="1890.5" y="1055.5" width="2.6" height="10.5" fill="#222"/>
</svg>
</body></html>
